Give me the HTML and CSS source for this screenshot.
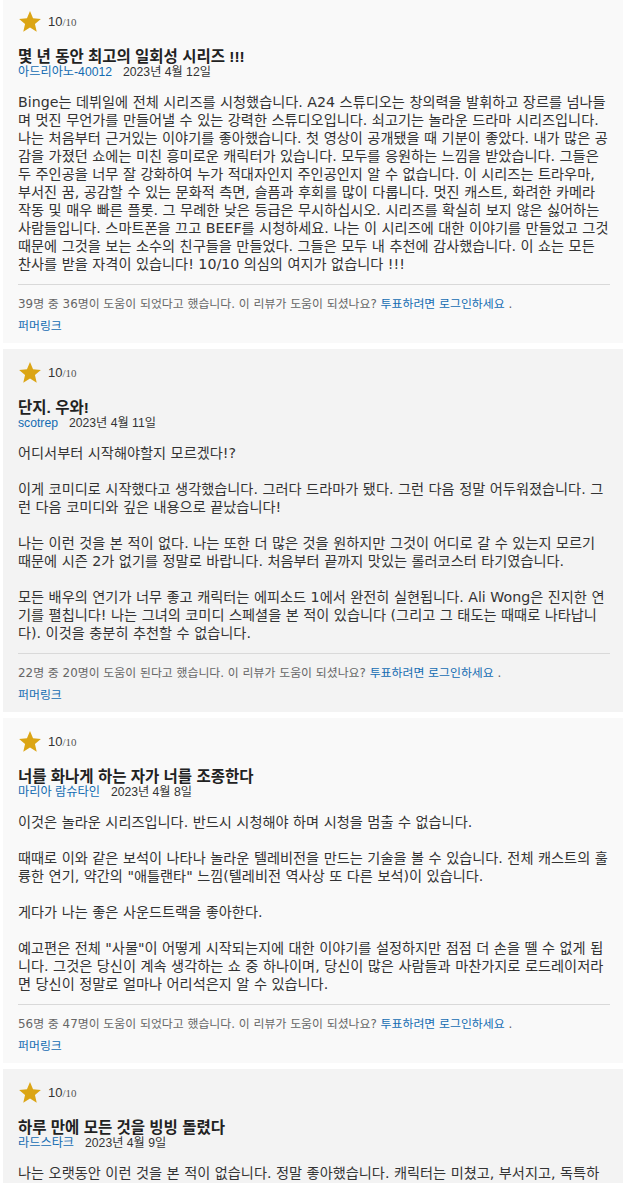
FILE: index.html
```html
<!DOCTYPE html>
<html lang="ko">
<head>
<meta charset="utf-8">
<title>리뷰</title>
<link rel="stylesheet" href="styles.css">
</head>
<body>
<div class="reviews">

  <div class="card odd">
    <div class="rating">
      <svg class="star" viewBox="2 2 20 19.3" width="22" height="21"><path d="M12 17.27L18.18 21l-1.64-7.03L22 9.24l-7.19-.61L12 2 9.19 8.63 2 9.24l5.46 4.73L5.82 21z"/></svg>
      <span class="score">10</span><span class="scale">/10</span>
    </div>
    <div class="title">몇 년 동안 최고의 일회성 시리즈 !!!</div>
    <div class="byline"><a class="name" href="#">아드리아노-40012</a><span class="date">2023년 4월 12일</span></div>
    <div class="body">Binge는 데뷔일에 전체 시리즈를 시청했습니다. A24 스튜디오는 창의력을 발휘하고 장르를 넘나들며 멋진 무언가를 만들어낼 수 있는 강력한 스튜디오입니다. 쇠고기는 놀라운 드라마 시리즈입니다. 나는 처음부터 근거있는 이야기를 좋아했습니다. 첫 영상이 공개됐을 때 기분이 좋았다. 내가 많은 공감을 가졌던 쇼에는 미친 흥미로운 캐릭터가 있습니다. 모두를 응원하는 느낌을 받았습니다. 그들은 두 주인공을 너무 잘 강화하여 누가 적대자인지 주인공인지 알 수 없습니다. 이 시리즈는 트라우마, 부서진 꿈, 공감할 수 있는 문화적 측면, 슬픔과 후회를 많이 다룹니다. 멋진 캐스트, 화려한 카메라 작동 및 매우 빠른 플롯. 그 무례한 낮은 등급은 무시하십시오. 시리즈를 확실히 보지 않은 싫어하는 사람들입니다. 스마트폰을 끄고 BEEF를 시청하세요. 나는 이 시리즈에 대한 이야기를 만들었고 그것 때문에 그것을 보는 소수의 친구들을 만들었다. 그들은 모두 내 추천에 감사했습니다. 이 쇼는 모든 찬사를 받을 자격이 있습니다! 10/10 의심의 여지가 없습니다 !!!</div>
    <div class="actions">
      <div class="helpful">39명 중 36명이 도움이 되었다고 했습니다. 이 리뷰가 도움이 되셨나요? <a href="#">투표하려면 로그인하세요</a> .</div>
      <a class="permalink" href="#">퍼머링크</a>
    </div>
  </div>

  <div class="card even">
    <div class="rating">
      <svg class="star" viewBox="2 2 20 19.3" width="22" height="21"><path d="M12 17.27L18.18 21l-1.64-7.03L22 9.24l-7.19-.61L12 2 9.19 8.63 2 9.24l5.46 4.73L5.82 21z"/></svg>
      <span class="score">10</span><span class="scale">/10</span>
    </div>
    <div class="title">단지. 우와!</div>
    <div class="byline"><a class="name" href="#">scotrep</a><span class="date">2023년 4월 11일</span></div>
    <div class="body">어디서부터 시작해야할지 모르겠다!?<br><br>이게 코미디로 시작했다고 생각했습니다. 그러다 드라마가 됐다. 그런 다음 정말 어두워졌습니다. 그런 다음 코미디와 깊은 내용으로 끝났습니다!<br><br>나는 이런 것을 본 적이 없다. 나는 또한 더 많은 것을 원하지만 그것이 어디로 갈 수 있는지 모르기 때문에 시즌 2가 없기를 정말로 바랍니다. 처음부터 끝까지 맛있는 롤러코스터 타기였습니다.<br><br>모든 배우의 연기가 너무 좋고 캐릭터는 에피소드 1에서 완전히 실현됩니다. Ali Wong은 진지한 연기를 펼칩니다! 나는 그녀의 코미디 스페셜을 본 적이 있습니다 (그리고 그 태도는 때때로 나타납니다). 이것을 충분히 추천할 수 없습니다.</div>
    <div class="actions">
      <div class="helpful">22명 중 20명이 도움이 된다고 했습니다. 이 리뷰가 도움이 되셨나요? <a href="#">투표하려면 로그인하세요</a> .</div>
      <a class="permalink" href="#">퍼머링크</a>
    </div>
  </div>

  <div class="card odd">
    <div class="rating">
      <svg class="star" viewBox="2 2 20 19.3" width="22" height="21"><path d="M12 17.27L18.18 21l-1.64-7.03L22 9.24l-7.19-.61L12 2 9.19 8.63 2 9.24l5.46 4.73L5.82 21z"/></svg>
      <span class="score">10</span><span class="scale">/10</span>
    </div>
    <div class="title">너를 화나게 하는 자가 너를 조종한다</div>
    <div class="byline"><a class="name" href="#">마리아 람슈타인</a><span class="date">2023년 4월 8일</span></div>
    <div class="body">이것은 놀라운 시리즈입니다. 반드시 시청해야 하며 시청을 멈출 수 없습니다.<br><br>때때로 이와 같은 보석이 나타나 놀라운 텔레비전을 만드는 기술을 볼 수 있습니다. 전체 캐스트의 훌륭한 연기, 약간의 "애틀랜타" 느낌(텔레비전 역사상 또 다른 보석)이 있습니다.<br><br>게다가 나는 좋은 사운드트랙을 좋아한다.<br><br>예고편은 전체 "사물"이 어떻게 시작되는지에 대한 이야기를 설정하지만 점점 더 손을 뗄 수 없게 됩니다. 그것은 당신이 계속 생각하는 쇼 중 하나이며, 당신이 많은 사람들과 마찬가지로 로드레이저라면 당신이 정말로 얼마나 어리석은지 알 수 있습니다.</div>
    <div class="actions">
      <div class="helpful">56명 중 47명이 도움이 되었다고 했습니다. 이 리뷰가 도움이 되셨나요? <a href="#">투표하려면 로그인하세요</a> .</div>
      <a class="permalink" href="#">퍼머링크</a>
    </div>
  </div>

  <div class="card even">
    <div class="rating">
      <svg class="star" viewBox="2 2 20 19.3" width="22" height="21"><path d="M12 17.27L18.18 21l-1.64-7.03L22 9.24l-7.19-.61L12 2 9.19 8.63 2 9.24l5.46 4.73L5.82 21z"/></svg>
      <span class="score">10</span><span class="scale">/10</span>
    </div>
    <div class="title">하루 만에 모든 것을 빙빙 돌렸다</div>
    <div class="byline"><a class="name" href="#">라드스타크</a><span class="date">2023년 4월 9일</span></div>
    <div class="body">나는 오랫동안 이런 것을 본 적이 없습니다. 정말 좋아했습니다. 캐릭터는 미쳤고, 부서지고, 독특하며 모두 자신만의 방식으로 공감할 수 있습니다. 연기와 음악, 그리고 이야기의 전개가 모두 훌륭했습니다.</div>
    <div class="actions">
      <div class="helpful">18명 중 15명이 도움이 되었다고 했습니다. 이 리뷰가 도움이 되셨나요? <a href="#">투표하려면 로그인하세요</a> .</div>
      <a class="permalink" href="#">퍼머링크</a>
    </div>
  </div>

</div>
</body>
</html>
```

FILE: styles.css
```css
html, body {
  margin: 0;
  padding: 0;
  background: #ffffff;
}

body {
  font-family: "DejaVu Sans", Verdana, "Noto Sans CJK KR", sans-serif;
  color: #333333;
}

a {
  color: #136cb2;
  text-decoration: none;
}

.reviews {
  display: flex;
  flex-direction: column;
  gap: 6px;
  padding: 0 5px 0 3px;
}

.card {
  padding: 12px 13px 9px 15px;
}

.card:first-child {
  margin-top: -2px;
}

.card.odd {
  background: #f9f9f9;
}

.card.even {
  background: #f3f3f3;
}

.rating {
  display: flex;
  align-items: center;
  height: 22px;
}

.star {
  fill: #dba515;
  margin-left: 1px;
  margin-right: 7px;
  display: block;
}

.score {
  font-family: "Liberation Sans", Arial, "Noto Sans CJK KR", sans-serif;
  font-size: 13px;
  color: #333333;
}

.scale {
  font-family: "Liberation Serif", "Times New Roman", serif;
  font-size: 11px;
  color: #555555;
  padding-top: 2px;
}

.title {
  margin-top: 16px;
  font-family: "Liberation Sans", Arial, "Noto Sans CJK KR", sans-serif;
  font-size: 15.5px;
  font-weight: bold;
  line-height: 18px;
  color: #222222;
}

.byline {
  font-family: "Liberation Sans", Arial, "Noto Sans CJK KR", sans-serif;
  font-size: 12.2px;
  line-height: 12px;
}

.byline .date {
  margin-left: 11px;
  color: #333333;
}

.body {
  margin-top: 15px;
  font-size: 14.2px;
  line-height: 18px;
  color: #333333;
}

.actions {
  margin-top: 11px;
  border-top: 1px solid #d9d9d9;
  padding-top: 11px;
  display: flex;
  flex-direction: column;
  align-items: flex-start;
  gap: 6px;
}

.helpful {
  font-size: 11.9px;
  line-height: 16px;
  color: #666666;
}

.permalink {
  font-size: 11.9px;
  line-height: 16px;
}
```
